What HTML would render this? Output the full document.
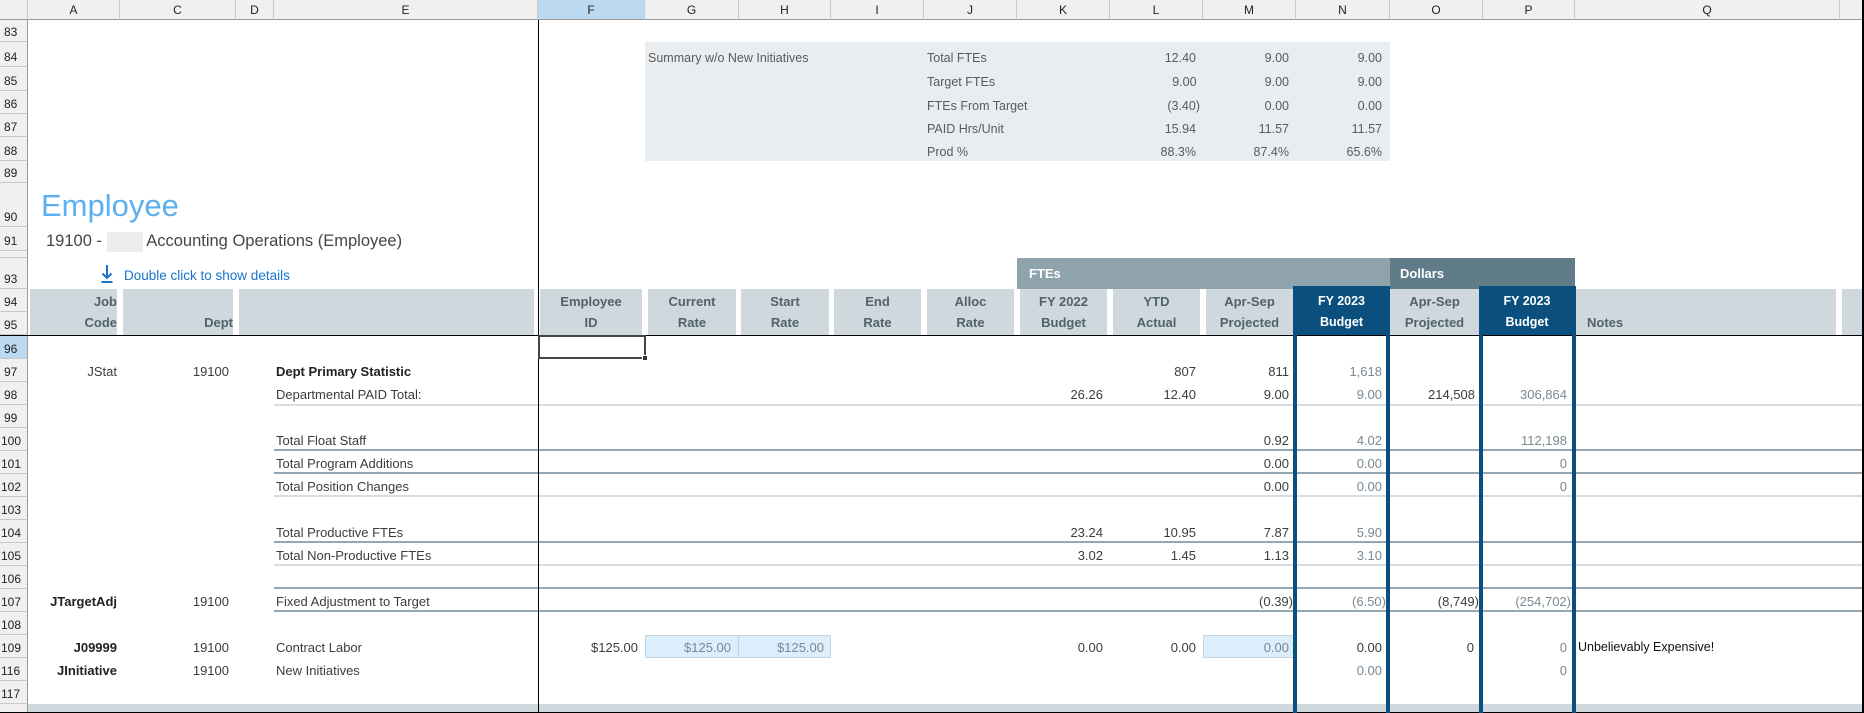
<!DOCTYPE html>
<html><head><meta charset="utf-8"><style>
body{margin:0;width:1864px;height:713px;overflow:hidden;background:#fff;position:relative;font-family:"Liberation Sans",sans-serif}
div{position:absolute;box-sizing:border-box}
.ch{top:0;height:20px;background:#f0f0f0;border-right:1px solid #c8c8c8;border-bottom:1px solid #9a9a9a;font-size:12px;line-height:20px;text-align:center;color:#222}
.rh{left:0;width:28px;background:#f0f0f0;border-bottom:1px solid #c8c8c8;border-right:1px solid #9a9a9a;font-size:12px;text-align:left;padding-left:4px;color:#222;display:flex;align-items:flex-end;padding-bottom:2px}
.t{font-size:13px;line-height:23px;height:23px;white-space:nowrap;color:#3c3c3c}
.hd{top:289px;height:46px;background:#cfd8dd;font-size:13px;font-weight:bold;color:#51626c;line-height:21px;text-align:center;padding-top:2px}
.r{text-align:right !important}
.bl{background:#0b4f7f;color:#fff}
.ln{left:274px;width:1590px;height:2px}
.dk{background:#94a8b3}.lt{background:#d3dde2}
.vb{top:286px;width:4px;height:427px;background:#0b4f7f}
.s{font-size:12.5px;line-height:23px;color:#5a5a5a;white-space:nowrap}
.lc{color:#7a8892}
</style></head><body>
<div class="ch" style="left:0;width:28px"></div>
<div class="ch" style="left:28px;width:92px">A</div>
<div class="ch" style="left:120px;width:116px">C</div>
<div class="ch" style="left:236px;width:38px">D</div>
<div class="ch" style="left:274px;width:264px">E</div>
<div class="ch" style="left:538px;width:107px;background:#bcd9f2">F</div>
<div class="ch" style="left:645px;width:94px">G</div>
<div class="ch" style="left:739px;width:92px">H</div>
<div class="ch" style="left:831px;width:93px">I</div>
<div class="ch" style="left:924px;width:93px">J</div>
<div class="ch" style="left:1017px;width:93px">K</div>
<div class="ch" style="left:1110px;width:93px">L</div>
<div class="ch" style="left:1203px;width:93px">M</div>
<div class="ch" style="left:1296px;width:94px">N</div>
<div class="ch" style="left:1390px;width:93px">O</div>
<div class="ch" style="left:1483px;width:92px">P</div>
<div class="ch" style="left:1575px;width:265px">Q</div>
<div class="ch" style="left:1840px;width:24px"></div>
<div class="rh" style="top:20px;height:22px">83</div>
<div class="rh" style="top:42px;height:25px">84</div>
<div class="rh" style="top:67px;height:24px">85</div>
<div class="rh" style="top:91px;height:23px">86</div>
<div class="rh" style="top:114px;height:23px">87</div>
<div class="rh" style="top:137px;height:24px">88</div>
<div class="rh" style="top:161px;height:22px">89</div>
<div class="rh" style="top:183px;height:44px">90</div>
<div class="rh" style="top:227px;height:24px">91</div>
<div class="rh" style="top:251px;height:7px;font-size:6px;overflow:hidden"></div>
<div class="rh" style="top:258px;height:31px">93</div>
<div class="rh" style="top:289px;height:23px">94</div>
<div class="rh" style="top:312px;height:23px">95</div>
<div class="rh" style="top:335px;height:24px;background:#bcd9f2">96</div>
<div class="rh" style="top:359px;height:23px">97</div>
<div class="rh" style="top:382px;height:23px">98</div>
<div class="rh" style="top:405px;height:23px">99</div>
<div class="rh" style="top:428px;height:23px;padding-left:1px">100</div>
<div class="rh" style="top:451px;height:23px;padding-left:1px">101</div>
<div class="rh" style="top:474px;height:23px;padding-left:1px">102</div>
<div class="rh" style="top:497px;height:23px;padding-left:1px">103</div>
<div class="rh" style="top:520px;height:23px;padding-left:1px">104</div>
<div class="rh" style="top:543px;height:23px;padding-left:1px">105</div>
<div class="rh" style="top:566px;height:23px;padding-left:1px">106</div>
<div class="rh" style="top:589px;height:23px;padding-left:1px">107</div>
<div class="rh" style="top:612px;height:23px;padding-left:1px">108</div>
<div class="rh" style="top:635px;height:23px;padding-left:1px">109</div>
<div class="rh" style="top:658px;height:23px;padding-left:1px">116</div>
<div class="rh" style="top:681px;height:23px;padding-left:1px">117</div>
<div class="rh" style="top:704px;height:9px"></div>

<div style="left:645px;top:42px;width:745px;height:119px;background:#e9edf0"></div>
<div class="s" style="left:648px;top:47px">Summary w/o New Initiatives</div>
<div class="s" style="left:927px;top:47px">Total FTEs</div>
<div class="s" style="left:927px;top:71px">Target FTEs</div>
<div class="s" style="left:927px;top:95px">FTEs From Target</div>
<div class="s" style="left:927px;top:118px">PAID Hrs/Unit</div>
<div class="s" style="left:927px;top:141px">Prod %</div>
<div class="s r" style="left:1110px;width:86px;top:47px">12.40</div>
<div class="s r" style="left:1110px;width:90px;top:71px">9.00&nbsp;</div>
<div class="s r" style="left:1110px;width:90px;top:95px">(3.40)</div>
<div class="s r" style="left:1110px;width:86px;top:118px">15.94</div>
<div class="s r" style="left:1110px;width:86px;top:141px">88.3%</div>
<div class="s r" style="left:1203px;width:86px;top:47px">9.00</div>
<div class="s r" style="left:1203px;width:86px;top:71px">9.00</div>
<div class="s r" style="left:1203px;width:86px;top:95px">0.00</div>
<div class="s r" style="left:1203px;width:86px;top:118px">11.57</div>
<div class="s r" style="left:1203px;width:86px;top:141px">87.4%</div>
<div class="s r" style="left:1296px;width:86px;top:47px">9.00</div>
<div class="s r" style="left:1296px;width:86px;top:71px">9.00</div>
<div class="s r" style="left:1296px;width:86px;top:95px">0.00</div>
<div class="s r" style="left:1296px;width:86px;top:118px">11.57</div>
<div class="s r" style="left:1296px;width:86px;top:141px">65.6%</div>

<div style="left:41px;top:186px;font-size:31px;color:#5cb0ef;line-height:40px;white-space:nowrap">Employee</div>
<div style="left:46px;top:229px;font-size:16.5px;color:#454545;line-height:24px;white-space:nowrap">19100 - <span style="display:inline-block;width:36px;height:20px;background:#ececec;vertical-align:middle"></span> Accounting Operations (Employee)</div>
<svg style="position:absolute;left:100px;top:264px" width="14" height="20" viewBox="0 0 14 20"><path d="M7 1 V14 M2.5 9.5 L7 14 L11.5 9.5" stroke="#1a73c9" stroke-width="2" fill="none"/><rect x="1.5" y="17" width="11" height="2" fill="#1a73c9"/></svg>
<div style="left:124px;top:266px;font-size:13.5px;color:#1a73c9;line-height:20px;white-space:nowrap">Double click to show details</div>

<div style="left:1017px;top:258px;width:373px;height:31px;background:#8fa3ac;color:#fff;font-weight:bold;font-size:13px;line-height:31px;padding-left:12px">FTEs</div>
<div style="left:1390px;top:258px;width:185px;height:31px;background:#607c89;color:#fff;font-weight:bold;font-size:13px;line-height:31px;padding-left:10px">Dollars</div>
<div class="hd r" style="left:30px;width:87px">Job<br>Code</div>
<div class="hd r" style="left:123px;width:110px"><br>Dept</div>
<div class="hd" style="left:239px;width:295px"></div>
<div class="hd" style="left:540px;width:102px">Employee<br>ID</div>
<div class="hd" style="left:648px;width:88px">Current<br>Rate</div>
<div class="hd" style="left:741px;width:88px">Start<br>Rate</div>
<div class="hd" style="left:834px;width:87px">End<br>Rate</div>
<div class="hd" style="left:927px;width:87px">Alloc<br>Rate</div>
<div class="hd" style="left:1020px;width:87px">FY 2022<br>Budget</div>
<div class="hd" style="left:1113px;width:87px">YTD<br>Actual</div>
<div class="hd" style="left:1206px;width:87px">Apr-Sep<br>Projected</div>
<div class="hd bl" style="left:1293px;width:97px;top:286px;height:49px;padding-top:5px;font-size:12.5px">FY 2023<br>Budget</div>
<div class="hd" style="left:1390px;width:89px">Apr-Sep<br>Projected</div>
<div class="hd bl" style="left:1479px;width:96px;top:286px;height:49px;padding-top:5px;font-size:12.5px">FY 2023<br>Budget</div>
<div class="hd" style="left:1575px;width:261px;text-align:left;padding-left:12px"><br>Notes</div>
<div class="hd" style="left:1842px;width:22px"></div>

<div style="left:0;top:335px;width:1864px;height:1px;background:#000"></div>
<div class="ln lt" style="top:404px"></div>
<div class="ln dk" style="top:449px"></div>
<div class="ln dk" style="top:472px"></div>
<div class="ln lt" style="top:495px"></div>
<div class="ln dk" style="top:541px"></div>
<div class="ln lt" style="top:564px"></div>
<div class="ln dk" style="top:587px"></div>
<div class="ln dk" style="top:610px"></div>
<div style="left:28px;top:704px;width:1836px;height:8px;background:#cfd8dd"></div>
<div style="left:0;top:712px;width:1864px;height:1px;background:#000"></div>
<div style="left:538px;top:20px;width:1px;height:693px;background:#000"></div>
<div style="left:1862px;top:0;width:2px;height:713px;background:#000"></div>
<div style="left:538px;top:335px;width:108px;height:24px;border:2px solid #444"></div>
<div style="left:642px;top:355px;width:6px;height:6px;background:#333;border:1px solid #fff"></div>

<div style="left:645px;top:635px;width:94px;height:23px;background:#dcedfb;border:1px solid #c6d4de"></div>
<div style="left:738px;top:635px;width:93px;height:23px;background:#dcedfb;border:1px solid #c6d4de"></div>
<div style="left:1203px;top:635px;width:92px;height:23px;background:#dcedfb;border:1px solid #c6d4de"></div>

<div class="t r" style="left:30px;width:87px;top:360px">JStat</div>
<div class="t r" style="left:123px;width:106px;top:360px">19100</div>
<div class="t" style="left:276px;top:360px;font-weight:bold;color:#222">Dept Primary Statistic</div>
<div class="t r" style="left:1110px;width:86px;top:360px">807</div>
<div class="t r" style="left:1203px;width:86px;top:360px">811</div>
<div class="t r lc" style="left:1296px;width:86px;top:360px">1,618</div>

<div class="t" style="left:276px;top:383px">Departmental PAID Total:</div>
<div class="t r" style="left:1017px;width:86px;top:383px">26.26</div>
<div class="t r" style="left:1110px;width:86px;top:383px">12.40</div>
<div class="t r" style="left:1203px;width:86px;top:383px">9.00</div>
<div class="t r lc" style="left:1296px;width:86px;top:383px">9.00</div>
<div class="t r" style="left:1390px;width:85px;top:383px">214,508</div>
<div class="t r lc" style="left:1483px;width:84px;top:383px">306,864</div>

<div class="t" style="left:276px;top:429px">Total Float Staff</div>
<div class="t r" style="left:1203px;width:86px;top:429px">0.92</div>
<div class="t r lc" style="left:1296px;width:86px;top:429px">4.02</div>
<div class="t r lc" style="left:1483px;width:84px;top:429px">112,198</div>

<div class="t" style="left:276px;top:452px">Total Program Additions</div>
<div class="t r" style="left:1203px;width:86px;top:452px">0.00</div>
<div class="t r lc" style="left:1296px;width:86px;top:452px">0.00</div>
<div class="t r lc" style="left:1483px;width:84px;top:452px">0</div>

<div class="t" style="left:276px;top:475px">Total Position Changes</div>
<div class="t r" style="left:1203px;width:86px;top:475px">0.00</div>
<div class="t r lc" style="left:1296px;width:86px;top:475px">0.00</div>
<div class="t r lc" style="left:1483px;width:84px;top:475px">0</div>

<div class="t" style="left:276px;top:521px">Total Productive FTEs</div>
<div class="t r" style="left:1017px;width:86px;top:521px">23.24</div>
<div class="t r" style="left:1110px;width:86px;top:521px">10.95</div>
<div class="t r" style="left:1203px;width:86px;top:521px">7.87</div>
<div class="t r lc" style="left:1296px;width:86px;top:521px">5.90</div>

<div class="t" style="left:276px;top:544px">Total Non-Productive FTEs</div>
<div class="t r" style="left:1017px;width:86px;top:544px">3.02</div>
<div class="t r" style="left:1110px;width:86px;top:544px">1.45</div>
<div class="t r" style="left:1203px;width:86px;top:544px">1.13</div>
<div class="t r lc" style="left:1296px;width:86px;top:544px">3.10</div>

<div class="t r" style="left:30px;width:87px;top:590px;font-weight:bold;color:#222">JTargetAdj</div>
<div class="t r" style="left:123px;width:106px;top:590px">19100</div>
<div class="t" style="left:276px;top:590px">Fixed Adjustment to Target</div>
<div class="t r" style="left:1203px;width:90px;top:590px">(0.39)</div>
<div class="t r lc" style="left:1296px;width:90px;top:590px">(6.50)</div>
<div class="t r" style="left:1390px;width:89px;top:590px">(8,749)</div>
<div class="t r lc" style="left:1483px;width:88px;top:590px">(254,702)</div>

<div class="t r" style="left:30px;width:87px;top:636px;font-weight:bold;color:#222">J09999</div>
<div class="t r" style="left:123px;width:106px;top:636px">19100</div>
<div class="t" style="left:276px;top:636px">Contract Labor</div>
<div class="t r" style="left:538px;width:100px;top:636px">$125.00</div>
<div class="t r lc" style="left:645px;width:86px;top:636px">$125.00</div>
<div class="t r lc" style="left:739px;width:85px;top:636px">$125.00</div>
<div class="t r" style="left:1017px;width:86px;top:636px">0.00</div>
<div class="t r" style="left:1110px;width:86px;top:636px">0.00</div>
<div class="t r lc" style="left:1203px;width:86px;top:636px">0.00</div>
<div class="t r" style="left:1296px;width:86px;top:636px">0.00</div>
<div class="t r" style="left:1390px;width:84px;top:636px">0</div>
<div class="t r lc" style="left:1483px;width:84px;top:636px">0</div>
<div class="t" style="left:1578px;top:636px;color:#111;font-size:12.5px">Unbelievably Expensive!</div>

<div class="t r" style="left:30px;width:87px;top:659px;font-weight:bold;color:#222">JInitiative</div>
<div class="t r" style="left:123px;width:106px;top:659px">19100</div>
<div class="t" style="left:276px;top:659px">New Initiatives</div>
<div class="t r lc" style="left:1296px;width:86px;top:659px">0.00</div>
<div class="t r lc" style="left:1483px;width:84px;top:659px">0</div>

<div class="vb" style="left:1293px"></div>
<div class="vb" style="left:1386px"></div>
<div class="vb" style="left:1479px"></div>
<div class="vb" style="left:1572px"></div>
</body></html>
